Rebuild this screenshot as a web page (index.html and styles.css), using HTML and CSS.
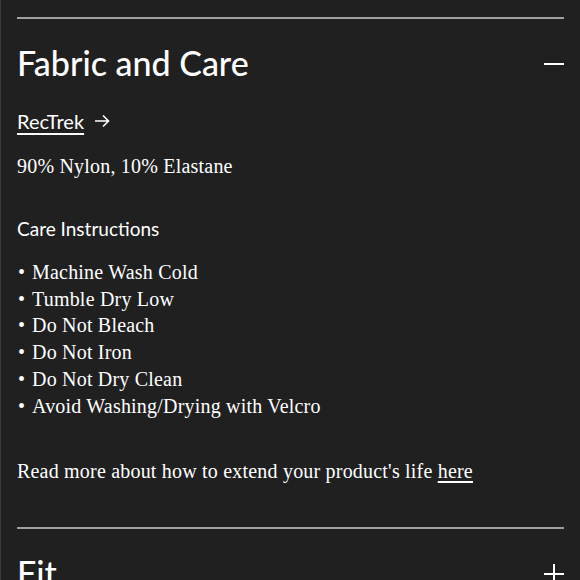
FILE: index.html
```html
<!DOCTYPE html>
<html lang="en">
<head>
<meta charset="utf-8">
<title>Fabric and Care</title>
<link rel="stylesheet" href="styles.css">
</head>
<body>
<div class="page">
  <section class="acc">
    <div class="acc-head">
      <h2 class="acc-title">Fabric and Care</h2>
      <span class="icon-minus"></span>
    </div>
    <div class="acc-body">
      <p class="fabric-link"><a href="#">RecTrek</a>
        <svg class="arrow" width="16" height="14" viewBox="0 0 16 14"><path d="M1 7H14.5M9 1.5L14.5 7L9 12.5" fill="none" stroke="#fff" stroke-width="1.6"/></svg>
      </p>
      <p class="serif comp">90% Nylon, 10% Elastane</p>
      <h3 class="care-title">Care Instructions</h3>
      <ul class="care-list serif">
        <li>Machine Wash Cold</li>
        <li>Tumble Dry Low</li>
        <li>Do Not Bleach</li>
        <li>Do Not Iron</li>
        <li>Do Not Dry Clean</li>
        <li>Avoid Washing/Drying with Velcro</li>
      </ul>
      <p class="serif more">Read more about how to extend your product's life <a href="#">here</a></p>
    </div>
  </section>
  <section class="acc">
    <div class="acc-head">
      <h2 class="acc-title">Fit</h2>
      <span class="icon-plus"></span>
    </div>
  </section>
</div>
</body>
</html>
```
FILE: styles.css
```css
html, body {
  margin: 0;
  padding: 0;
  background: #202020;
  color: #fff;
}
body {
  border-left: 1px solid #3a3a3a;
  height: 580px;
  overflow: hidden;
  box-sizing: border-box;
}
.page {
  padding: 17px 16px 0 16px;
}
.acc {
  border-top: 2px solid #a0a0a0;
}
.acc-head {
  display: flex;
  justify-content: space-between;
  align-items: center;
  height: 90px;
}
.acc-title {
  margin: 0 0 4px 0;
  font-family: Lato, "Liberation Sans", sans-serif;
  font-weight: 500;
  font-size: 34px;
}
.icon-minus {
  width: 20px;
  height: 2px;
  background: #fff;
}
.icon-plus {
  width: 20px;
  height: 20px;
  position: relative;
}
.icon-plus::before, .icon-plus::after {
  content: "";
  position: absolute;
  background: #fff;
}
.icon-plus::before { left: 0; right: 0; top: 9px; height: 2px; }
.icon-plus::after { top: 0; bottom: 0; left: 9px; width: 2px; }
.acc-body {
  padding-bottom: 44px;
}
.serif {
  font-family: "Liberation Serif", serif;
  font-size: 20px;
  letter-spacing: 0.2px;
}
p { margin: 0; }
.fabric-link {
  display: flex;
  align-items: center;
  gap: 10px;
  font-family: Lato, "Liberation Sans", sans-serif;
  font-size: 20px;
}
.fabric-link a {
  color: #fff;
  text-underline-offset: 4px;
  text-decoration-thickness: 2px;
}
.comp { margin-top: 22px; }
.care-title {
  margin: 39px 0 0 0;
  font-family: Lato, "Liberation Sans", sans-serif;
  font-weight: 400;
  font-size: 19px;
}
.care-list {
  margin: 19px 0 0 0;
  padding: 0;
  list-style: none;
  line-height: 26.7px;
}
.care-list li::before {
  content: "\2022";
  display: inline-block;
  width: 14px;
  padding-left: 1px;
  letter-spacing: 0;
}
.more { margin-top: 41px; }
.more a { color: #fff; text-underline-offset: 3px; }
```
